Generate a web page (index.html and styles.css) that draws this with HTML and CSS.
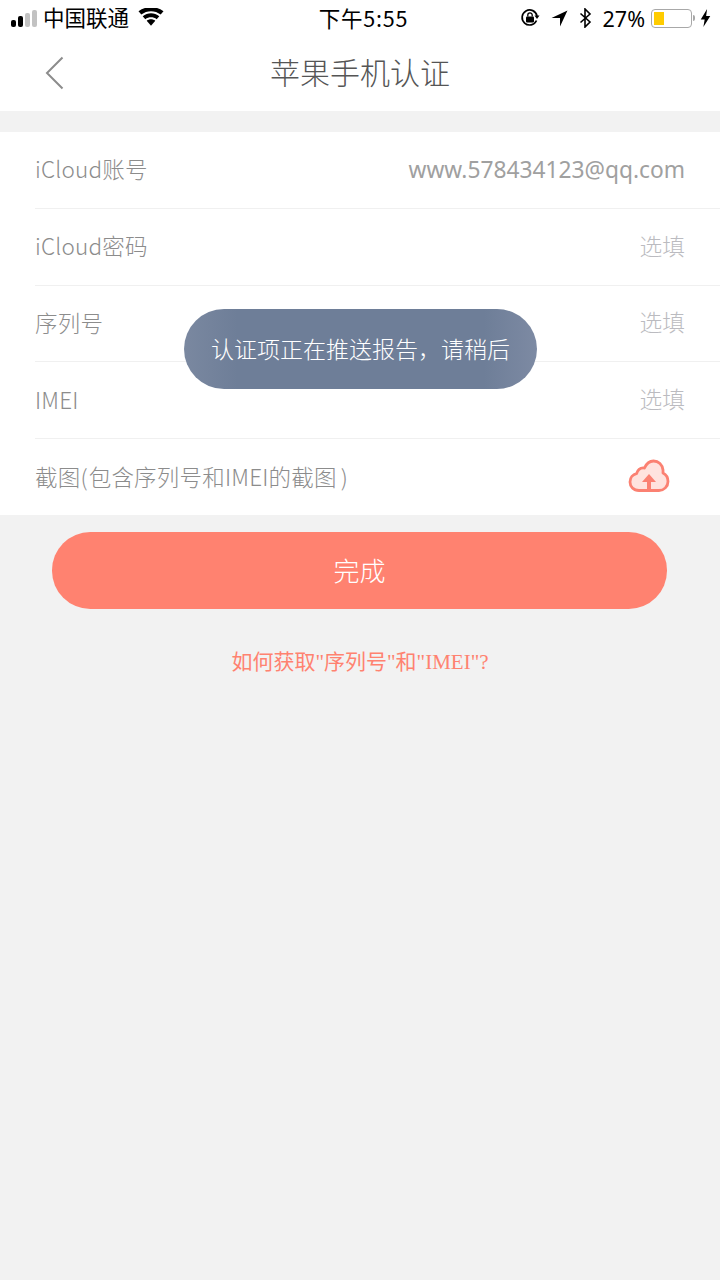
FILE: index.html
```html
<!DOCTYPE html>
<html lang="zh">
<head>
<meta charset="utf-8">
<title>苹果手机认证</title>
<link rel="stylesheet" href="styles.css">
</head>
<body>
<div class="page">
  <header class="top">
    <div class="status">
      <div class="status-left">
        <span class="signal"><i class="on b1"></i><i class="on b2"></i><i class="b3"></i><i class="b4"></i></span>
        <span class="carrier">中国联通</span>
        <svg class="wifi" width="26" height="18" viewBox="0 0 26 18"><path d="M13 17.800 8.700 12.800c2.500-2 6.100-2 8.600 0z" fill="#000"/><path d="M7.300 11.200 4.700 8.200c4.900-3.900 11.700-3.900 16.600 0l-2.600 3c-3.400-2.600-8-2.600-11.400 0z" fill="#000"/><path d="M3.300 6.500 .5 3.300c7.300-5.600 17.700-5.600 25 0l-2.800 3.200C17 2 9 2 3.300 6.500z" fill="#000"/></svg>
      </div>
      <div class="status-time">下午5:55</div>
      <div class="status-right">
        <svg width="20" height="20" viewBox="0 0 20 20" class="lock"><path d="M16.500 12.500A7.500 7.500 0 1 1 17 8" fill="none" stroke="#000" stroke-width="1.700"/><path d="M14.500 7.500h5L17 11z" fill="#000"/><rect x="6" y="8.500" width="8" height="6" rx="1" fill="#000"/><path d="M7.800 8.500V7a2.200 2.200 0 0 1 4.400 0v1.500" fill="none" stroke="#000" stroke-width="1.300"/></svg>
        <svg width="17" height="17" viewBox="0 0 16 16" class="loc"><path d="M15.500 .5 8.500 15.500V7.500H.5z" fill="#000"/></svg>
        <svg width="13" height="20" viewBox="0 0 13 20" class="bt"><path d="M1.500 5.500 11 14l-5 5V1l5 5-9.500 8.500" fill="none" stroke="#000" stroke-width="1.600"/></svg>
        <span class="pct">27%</span>
        <span class="battery"><span class="battery-body"><span class="battery-fill"></span></span><span class="battery-tip"></span></span>
        <svg width="11" height="18" viewBox="0 0 10 17" class="bolt"><path d="M6.500 0 .5 9.800h3.700L3 17l6.500-10.500H5.600z" fill="#000"/></svg>
      </div>
    </div>
    <nav class="nav">
      <svg class="back" width="20" height="34" viewBox="0 0 20 34"><path d="M17.500 1.500 2 17l15.500 15.500" fill="none" stroke="#8c8c8c" stroke-width="2"/></svg>
      <h1 class="title">苹果手机认证</h1>
    </nav>
  </header>

  <section class="form">
    <div class="row"><span class="label">iCloud账号</span><span class="value">www.578434123@qq.com</span></div>
    <div class="row"><span class="label">iCloud密码</span><span class="hint">选填</span></div>
    <div class="row"><span class="label">序列号</span><span class="hint">选填</span></div>
    <div class="row"><span class="label">IMEI</span><span class="hint">选填</span></div>
    <div class="row row-last"><span class="label">截图<span class="paren-open">(</span>包含序列号和IMEI的截图<span class="paren-close">)</span></span>
      <svg class="cloud" width="42" height="34" viewBox="0 0 42 34"><path d="M11 31.500C5.500 31.500 2 27.500 2 23c0-4.500 3-7.500 6.500-8.300C10 10 13 8.500 16.500 9 18.500 4.500 22 2 25.500 2c5 0 9 3.500 9.500 9 .1 1 0 2 0 3 3 1.500 5 4.500 5 8.500 0 5-4 9-9 9z" fill="#ffe3de" stroke="#fb8172" stroke-width="2.800" stroke-linejoin="round"/><path d="M21 31V20" stroke="#fb8172" stroke-width="4"/><path d="M14 23 21 15l7 8z" fill="#fb8172"/></svg>
    </div>
  </section>

  <button class="done">完成</button>
  <a class="help">如何获取"序列号"和"IMEI"?</a>

  <div class="toast">认证项正在推送报告，请稍后</div>
</div>
</body>
</html>
```

FILE: styles.css
```css
* { box-sizing: border-box; }
html, body { margin: 0; padding: 0; }
body { background: #f2f2f2; font-family: "Noto Sans CJK SC", "Liberation Sans", sans-serif; }
.page { position: relative; width: 720px; height: 1280px; overflow: hidden; background: #f2f2f2; display: flex; flex-direction: column; }

.top { background: #fff; height: 111px; }
.status { height: 36px; display: flex; align-items: center; justify-content: space-between; padding: 0 9px 0 11px; position: relative; color: #000; }
.status-left { display: flex; align-items: center; }
.signal { display: flex; align-items: flex-end; gap: 2px; height: 18px; }
.signal i { display: block; width: 5px; background: #c2c2c2; border-radius: 2px; }
.signal .on { background: #000; }
.b1 { height: 7px; } .b2 { height: 11px; } .b3 { height: 14px; } .b4 { height: 17px; }
.carrier { font-size: 21.500px; line-height: 26px; margin-left: 6px; width: 86px; white-space: nowrap; position: relative; top: -1px; }
.wifi { margin-left: 9px; margin-top: -2px; }
.status-time { position: absolute; left: 7px; right: 0; top: 4px; text-align: center; font-size: 21.500px; line-height: 28px; letter-spacing: .8px; }
.status-right { display: flex; align-items: center; }
.lock { margin-right: 11px; }
.loc { margin-right: 11px; }
.bt { margin-right: 11px; }
.pct { font-family: "Noto Sans", "Liberation Sans", sans-serif; font-size: 21.500px; line-height: 26px; margin-right: 6px; font-weight: 400; position: relative; top: 1px; }
.battery { display: flex; align-items: center; margin-right: 5px; }
.battery-body { width: 41px; height: 19px; border: 1.500px solid #a8a8a8; border-radius: 4px; padding: 2px; display: block; }
.battery-fill { display: block; width: 10px; height: 100%; background: #ffcc00; }
.battery-tip { width: 2px; height: 6px; background: #a8a8a8; margin-left: 1px; border-radius: 0 2px 2px 0; }

.nav { height: 75px; display: flex; align-items: center; justify-content: center; padding-bottom: 5px; position: relative; }
.back { position: absolute; left: 45px; top: 20px; }
.title { margin: 0; font-size: 30px; font-weight: 300; color: #555; line-height: 40px; }

.form { margin-top: 21px; background: #fff; padding-left: 35px; }
.row { height: 76.800px; display: flex; align-items: center; justify-content: space-between; padding: 0 35px 3px 0; border-bottom: 1px solid #f0f0f0; }
.row-last { height: 76px; border-bottom: 0; padding-right: 50px; }
.label { font-size: 22.500px; font-weight: 300; color: #8c8c8c; line-height: 30px; letter-spacing: .2px; }
.paren-open { margin-right: 1px; }
.paren-close { margin-left: 4px; }
.value { font-size: 22.750px; color: #a0a0a0; line-height: 30px; font-family: "Noto Sans", sans-serif; font-weight: 400; margin-top: 3px; }
.hint { font-size: 22.750px; font-weight: 300; color: #bbbbc0; line-height: 30px; margin-top: 1px; }

.done { display: block; margin: 17px 53px 0 52px; width: 615px; height: 76.500px; border: 0; border-radius: 38.250px; background: #ff8270; color: #fff; font-size: 26px; font-weight: 300; font-family: inherit; padding: 0 0 2px; }
.help { display: block; margin-top: 39px; text-align: center; font-size: 21px; line-height: 28px; color: #ff8270; font-family: "Liberation Serif", "Noto Sans CJK SC", serif; }

.toast { position: absolute; left: 184px; top: 309px; width: 353px; height: 80px; border-radius: 40px; background: linear-gradient(90deg, #7a88a0 0, #6e7e98 15%, #6e7e98 85%, #7d8aa3 100%); color: #fff; font-size: 23px; font-weight: 300; line-height: 78px; text-align: center; }
```
